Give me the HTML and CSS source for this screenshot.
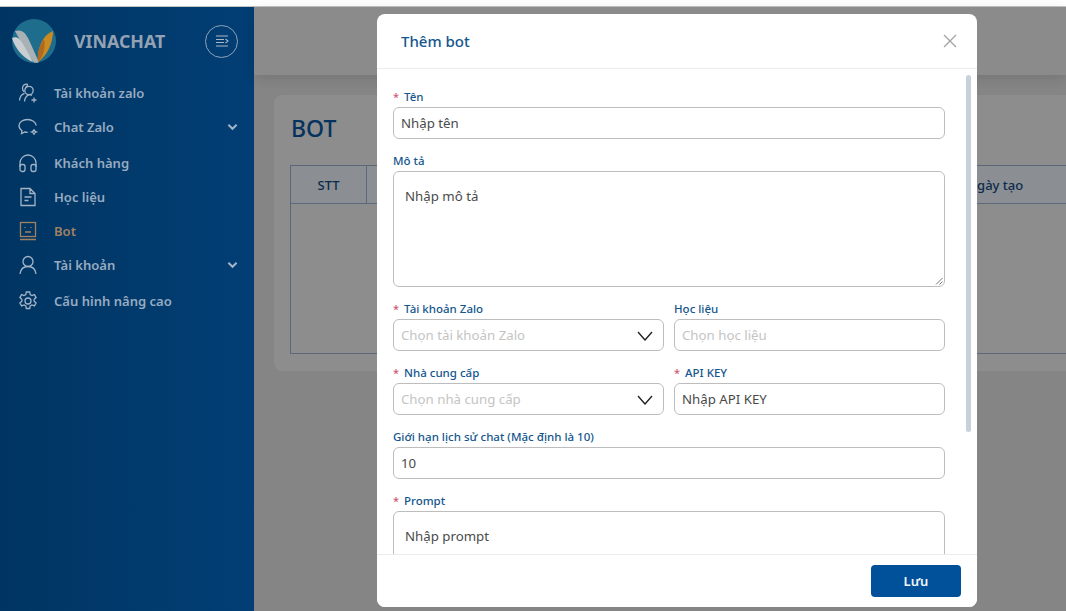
FILE: index.html
```html
<!DOCTYPE html>
<html lang="vi">
<head>
<meta charset="utf-8">
<title>Vinachat - Bot</title>
<link rel="stylesheet" href="styles.css">
</head>
<body>
<div class="strip"></div>
<div class="app">
  <aside class="sidebar">
    <div class="brand">
      <svg class="logo" viewBox="0 0 44 44" width="44" height="44">
        <circle cx="22" cy="22" r="22" fill="#1f6d8c"/>
        <path d="M3 12 C9 10 13 13 16 19 C20 27 23 35 27 43 C25 44 24 44 22 43.500 C15 35 9 23 3 12Z" fill="#a9b0b6"/>
        <path d="M0 19 C5 17 8 20 11 25 L21 43 C13 40 4 32 0 19Z" fill="#c9ced2"/>
        <path d="M26 43 C25 30 30 16 41 12 C41 24 35 37 26 43Z" fill="#c98a22"/>
        <path d="M26 43 C25 35 27 27 32 20 C34 28 31 38 26 43Z" fill="#b0691f"/>
      </svg>
      <span class="brand-name">VINACHAT</span>
      <span class="toggle">
        <svg viewBox="0 0 16 16" width="16" height="16" fill="none" stroke="#a9b7c7" stroke-width="1.1"><path d="M2 3h12M2 6.500h8M2 9.500h8M2 13h12M11.500 6l2.500 2-2.500 2"/></svg>
      </span>
    </div>
    <nav class="menu">
      <a class="item">
        <svg class="icon" viewBox="0 0 20 20"><circle cx="11" cy="7.500" r="4.200"/><path d="M7.500 4.500A3.800 3.800 0 0 0 9.500 1.300 4 4 0 0 0 4.500 5.500c0 1.500.7 2.600 1.800 3.300M1.500 17.500c.3-3.500 2-6.200 5-7.200M6.500 18.500c.4-3.400 2-5.800 4.500-6.800 1 0 2 .1 3 .6M16 14.500v5M13.500 17h5"/></svg>
        <span class="label">Tài khoản zalo</span>
      </a>
      <a class="item">
        <svg class="icon" viewBox="0 0 20 20"><path d="M18.200 8.500C17.800 5 14 2.500 9.500 2.500 4.800 2.500 1 5.300 1 8.800c0 2 1.200 3.700 3 4.900l-.5 3 3.300-1.700c1 .2 1.900.3 2.900.3"/><path d="M16 12.500c.3 1.500.8 2 2.500 2.500-1.700.5-2.200 1-2.500 2.500-.3-1.500-.8-2-2.500-2.500 1.700-.5 2.200-1 2.500-2.500z"/></svg>
        <span class="label">Chat Zalo</span>
        <svg class="chev" viewBox="0 0 12 8" width="11" height="8"><path d="M1.500 1.500L6 6l4.500-4.500"/></svg>
      </a>
      <a class="item item-gap">
        <svg class="icon" viewBox="0 0 20 20"><path d="M2 14v-4a8 8 0 0 1 16 0v4"/><rect x="2" y="11.500" width="5" height="7" rx="2"/><rect x="13" y="11.500" width="5" height="7" rx="2"/></svg>
        <span class="label">Khách hàng</span>
      </a>
      <a class="item">
        <svg class="icon" viewBox="0 0 20 20"><path d="M3 1.500h9l5 5v12H3zM12 1.500v5h5M6.500 10h7M6.500 13.500h4"/></svg>
        <span class="label">Học liệu</span>
      </a>
      <a class="item active">
        <svg class="icon" viewBox="0 0 20 20"><rect x="2.500" y="1.500" width="15" height="14"/><path d="M2 18.500h16M7 6v1M13 6v1M7 11h6"/></svg>
        <span class="label">Bot</span>
      </a>
      <a class="item">
        <svg class="icon" viewBox="0 0 20 20"><circle cx="10" cy="6.500" r="5"/><path d="M2 19c.5-4.500 3.500-7.500 8-7.500s7.500 3 8 7.500"/></svg>
        <span class="label">Tài khoản</span>
        <svg class="chev" viewBox="0 0 12 8" width="11" height="8"><path d="M1.500 1.500L6 6l4.500-4.500"/></svg>
      </a>
      <a class="item item-gap">
        <svg class="icon" viewBox="0 0 20 20"><circle cx="10" cy="10" r="3"/><path d="M8.300 1h3.400l.5 2.600 1.700.9 2.500-.9 1.700 3-2 1.700v1.900l2 1.700-1.700 3-2.500-.9-1.700.9-.5 2.600H8.300l-.5-2.600-1.700-.9-2.500.9-1.700-3 2-1.700V8.300l-2-1.700 1.700-3 2.500.9 1.700-.9z"/></svg>
        <span class="label">Cấu hình nâng cao</span>
      </a>
    </nav>
  </aside>
  <main class="main">
    <header class="topbar"></header>
    <section class="card">
      <h1 class="title">BOT</h1>
      <div class="table">
        <div class="thead">
          <div class="th th-stt">STT</div>
          <div class="th th-fill"></div>
          <div class="th th-date">Ngày tạo</div>
        </div>
      </div>
    </section>
  </main>
</div>

<div class="modal">
  <div class="modal-head">
    <h2 class="modal-title">Thêm bot</h2>
    <svg class="close" viewBox="0 0 14 14" width="14" height="14"><path d="M1 1l12 12M13 1L1 13"/></svg>
  </div>
  <div class="modal-body">
    <div class="scroll-thumb"></div>
    <div class="field"><label class="flabel"><span class="req">*</span>Tên</label><div class="input">Nhập tên</div></div>
    <div class="field"><label class="flabel">Mô tả</label><div class="input textarea">Nhập mô tả
      <svg class="grip" viewBox="0 0 8 8" width="8" height="8"><path d="M7.500 1L1 7.500M7.500 4.500L4.500 7.500"/></svg></div></div>
    <div class="row">
      <div class="field"><label class="flabel"><span class="req">*</span>Tài khoản Zalo</label><div class="input ph select">Chọn tài khoản Zalo<svg class="caret" viewBox="0 0 16 10" width="16" height="10"><path d="M1 1l7 8 7-8"/></svg></div></div>
      <div class="field"><label class="flabel">Học liệu</label><div class="input ph">Chọn học liệu</div></div>
    </div>
    <div class="row">
      <div class="field"><label class="flabel"><span class="req">*</span>Nhà cung cấp</label><div class="input ph select">Chọn nhà cung cấp<svg class="caret" viewBox="0 0 16 10" width="16" height="10"><path d="M1 1l7 8 7-8"/></svg></div></div>
      <div class="field"><label class="flabel"><span class="req">*</span>API KEY</label><div class="input">Nhập API KEY</div></div>
    </div>
    <div class="field"><label class="flabel">Giới hạn lịch sử chat (Mặc định là 10)</label><div class="input">10</div></div>
    <div class="field"><label class="flabel"><span class="req">*</span>Prompt</label><div class="input textarea">Nhập prompt</div></div>
  </div>
  <div class="modal-foot"><button class="save">Lưu</button></div>
</div>
</body>
</html>
```
FILE: styles.css
```css
* { box-sizing: border-box; }
html, body { margin: 0; height: 100%; overflow: hidden; }
body { font-family: "Noto Sans", "Open Sans", sans-serif; background: #fff; color: #222; display: flex; flex-direction: column; }
.strip { height: 7px; background: #fff; border-bottom: 1px solid #c4c4c4; flex: none; }
.app { flex: 1; display: flex; min-height: 0; }
.sidebar { width: 254px; flex: none; background: linear-gradient(90deg, #003562, #023e75); color: #9db0c5; }
.brand { display: flex; align-items: center; height: 69px; padding: 0 16px 1px 12px; }
.logo { flex: none; display: block; }
.brand-name { margin-left: 18px; font-size: 17.800px; font-weight: 700; color: #94a2b3; flex: 1; }
.toggle { width: 33px; height: 33px; border: 1px solid #8ea3b9; border-radius: 50%; display: flex; align-items: center; justify-content: center; }
.menu { display: flex; flex-direction: column; }
.item { display: flex; align-items: center; padding: 0 16px 0 18px; height: 34px; font-size: 13.050px; font-weight: 600; color: #98abc0; }
.item-gap { margin-top: 2px; }
.icon { width: 20px; height: 20px; flex: none; fill: none; stroke: #a3b4c7; stroke-width: 1.300; margin-right: 16px; }
.label { flex: 1; }
.chev { fill: none; stroke: #a3b4c7; stroke-width: 2.200; flex: none; }
.active { color: #a08260; }
.active .icon { stroke: #a08260; }
.main { flex: 1; background: #858585; min-width: 0; display: flex; flex-direction: column; }
.topbar { height: 68px; flex: none; background: #8b8b8b; box-shadow: 0 3px 12px rgba(0, 0, 0, .12); position: relative; }
.card { margin: 20px 0 0 20px; height: 276px; background: #8d8d8d; border-radius: 8px 0 0 8px; padding: 18px 0 0 17px; overflow: hidden; }
.title { margin: 0; font-size: 23px; font-weight: 500; line-height: 30px; color: #06335e; }
.table { margin-top: 22px; height: 189px; border: 1px solid #5c6878; border-right: 0; margin-left: -1px; }
.thead { display: flex; height: 38px; border-bottom: 1px solid #5c6a80; background: #8b8e93; }
.th { font-size: 13px; font-weight: 500; color: #0c2b4b; display: flex; align-items: center; justify-content: center; }
.th-stt { width: 76px; border-right: 1px solid #5c6a80; }
.th-fill { flex: 1; }
.th-date { width: 117px; justify-content: flex-start; padding-left: 18px; }
.modal { position: absolute; left: 377px; top: 14px; width: 600px; height: 593px; background: #fff; border-radius: 8px; display: flex; flex-direction: column; overflow: hidden; }
.modal-head { height: 55px; flex: none; display: flex; align-items: center; justify-content: space-between; padding: 0 20px 0 24px; border-bottom: 1px solid #ececec; }
.modal-title { margin: 0; font-size: 15px; font-weight: 500; color: #14568d; }
.close { fill: none; stroke: #a3a3a3; stroke-width: 1.300; }
.modal-body { flex: 1; min-height: 0; overflow: hidden; padding: 17px 32px 0 16px; position: relative; }
.scroll-thumb { position: absolute; left: 589px; top: 6px; width: 5px; height: 357px; background: #c6d1dc; border-radius: 3px; }
.field { margin-bottom: 11px; flex: 1; min-width: 0; }
.row { display: flex; gap: 10px; }
.flabel { display: block; height: 21px; font-size: 11.500px; line-height: 22px; font-weight: 500; color: #14568d; }
.req { color: #cf5a74; margin-right: 5px; font-size: 11px; }
.input { height: 32px; border: 1px solid #bdbdbd; border-radius: 6px; padding: 0 7px; font-size: 13.250px; line-height: 30px; color: #4a4a4a; background: #fff; position: relative; }
.textarea { height: 116px; padding: 12px 11px; line-height: 24px; }
.ph { color: #c4c4c4; }
.select { display: flex; justify-content: space-between; align-items: center; padding-right: 10px; }
.caret { fill: none; stroke: #222; stroke-width: 1.400; flex: none; margin-top: 2px; }
.grip { position: absolute; right: 1px; bottom: 1px; fill: none; stroke: #777; stroke-width: 1; }
.modal-foot { height: 53px; flex: none; border-top: 1px solid #ececec; display: flex; justify-content: flex-end; align-items: flex-start; padding: 10px 16px 0 0; background: #fff; }
.save { width: 90px; height: 32px; background: #01509a; border: 0; border-radius: 4px; color: #f3f6fa; font-family: inherit; font-size: 13px; font-weight: 600; }
```
